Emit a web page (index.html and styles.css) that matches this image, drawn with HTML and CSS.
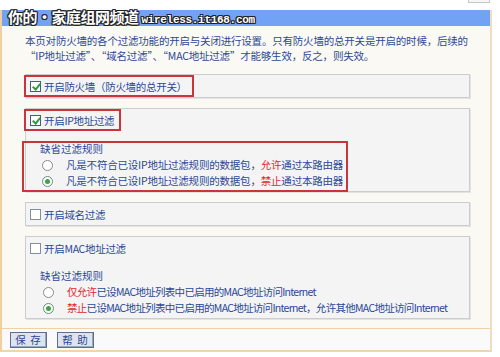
FILE: index.html
```html
<!DOCTYPE html>
<html lang="zh-CN">
<head>
<meta charset="UTF-8">
<title>过滤功能设置</title>
<link rel="stylesheet" href="styles.css">
</head>
<body>
  <div class="topbar"><span class="corner"></span></div>
  <div class="frame">
    <div class="header"></div>

    <p class="intro">
      本页对防火墙的各个过滤功能的开启与关闭进行设置。只有防火墙的总开关是开启的时候，后续的<br>
      “IP地址过滤”、“域名过滤”、“MAC地址过滤”才能够生效，反之，则失效。
    </p>

    <div class="box box-single">
      <div class="row mark"><span class="chk on"></span>开启防火墙（防火墙的总开关）</div>
    </div>

    <div class="box">
      <div class="row mark"><span class="chk on"></span>开启IP地址过滤</div>
      <div class="rules mark wide">
        <div class="rule-title">缺省过滤规则</div>
        <div class="opt"><span class="radio"></span>凡是不符合已设IP地址过滤规则的数据包，<em>允许</em>通过本路由器</div>
        <div class="opt"><span class="radio on"></span>凡是不符合已设IP地址过滤规则的数据包，<em>禁止</em>通过本路由器</div>
      </div>
    </div>

    <div class="box box-single">
      <div class="row"><span class="chk"></span>开启域名过滤</div>
    </div>

    <div class="box">
      <div class="row"><span class="chk"></span>开启MAC地址过滤</div>
      <div class="rules mac">
        <div class="rule-title">缺省过滤规则</div>
        <div class="opt"><span class="radio"></span><em>仅允许</em>已设MAC地址列表中已启用的MAC地址访问Internet</div>
        <div class="opt"><span class="radio on"></span><em>禁止</em>已设MAC地址列表中已启用的MAC地址访问Internet，允许其他MAC地址访问Internet</div>
      </div>
    </div>

    <div class="footer">
      <button>保 存</button>
      <button>帮 助</button>
    </div>
  </div>

  <div class="watermark">你的•家庭组网频道 <span>wireless.it168.com</span></div>
</body>
</html>
```

FILE: styles.css
```css
* { margin:0; padding:0; box-sizing:border-box; }
body { font-family: "Noto Sans CJK SC", "Liberation Sans", sans-serif; background:#fff; color:#2b4897; font-size:10.5px; width:500px; height:357px; overflow:hidden; position:relative; }

.topbar { height:10px; position:relative; }
.corner { position:absolute; right:10px; top:0; width:22px; height:3px; border:1px solid #c8c8c8; border-top:none; background:#f6f6f6; }

.frame { width:492px; background:#fbf9f3; border-left:2px solid #f2cf9f; border-right:2px solid #f2dcc0; border-bottom:2px solid #f2d3ab; }
.header { height:16px; background:#72a2f3; }

.intro { padding:7px 0 0 23px; line-height:15px; height:48px; letter-spacing:-0.2px; }

.box { margin:0 20px 10px 23px; background:#f4f4f4; border:1px solid #cdcdcd; box-shadow:1px 1px 0 #e3e3e3; padding:1px 0 0 0; }
.box-single { height:24px; }

.row { display:inline-flex; align-items:center; gap:2px; height:20px; padding:0 6px 0 5px; margin-left:-1px; letter-spacing:-0.3px; }
.mark { outline:2px solid #c9353a; outline-offset:-1px; }

.chk { width:11px; height:11px; border:1px solid #7f8fa0; background:#fff; position:relative; margin-right:1px; }
.chk.on { border-color:#3f5f7f; }
.chk.on::after { content:""; position:absolute; left:3px; top:0px; width:3px; height:6px; border:solid #2e9b3a; border-width:0 2px 2px 0; transform:rotate(40deg); }

.rules { margin-top:12px; padding:0 0 2px 14px; }
.rules.wide { width:324px; margin-left:-3px; padding-left:17px; }
.rules.mac { margin-top:11px; padding-left:14px; }
.rule-title { height:15px; line-height:14px; }
.opt { display:flex; align-items:center; height:16px; line-height:16px; letter-spacing:-0.2px; }
.mac .opt { letter-spacing:-0.7px; }
.opt em { font-style:normal; color:#e3262b; }

.radio { width:11px; height:11px; border:1px solid #8a8a8a; border-radius:50%; background:#fff; margin:0 13px 0 2px; position:relative; flex-shrink:0; }
.mac .radio { margin-left:3px; }
.radio.on { border-color:#6b8f73; }
.radio.on::after { content:""; position:absolute; left:2px; top:2px; width:5px; height:5px; border-radius:50%; background:#3ea346; }

.footer { border-top:1px solid #f2cfa5; background:#fafafa; height:22px; display:flex; align-items:center; gap:10px; padding-left:8px; margin-top:-1px; }
.footer button { font-family:inherit; font-size:10.5px; color:#2b4897; background:#dfe3ee; border:1px solid #5f6f8f; box-shadow:inset -1px -1px 0 #9aa6bd; width:37px; height:16px; line-height:12px; letter-spacing:1px; }

.watermark { position:absolute; left:8px; top:6px; font-size:15px; font-weight:bold; color:#fff; text-shadow:-1px -1px 0 #222, 1px -1px 0 #222, -1px 1px 0 #222, 1px 1px 0 #222, 0 1px 0 #222, 0 -1px 0 #222, 1px 0 0 #222, -1px 0 0 #222; letter-spacing:-0.5px; }
.watermark span { font-family:"Liberation Mono", monospace; font-size:11px; letter-spacing:-0.3px; }
```
